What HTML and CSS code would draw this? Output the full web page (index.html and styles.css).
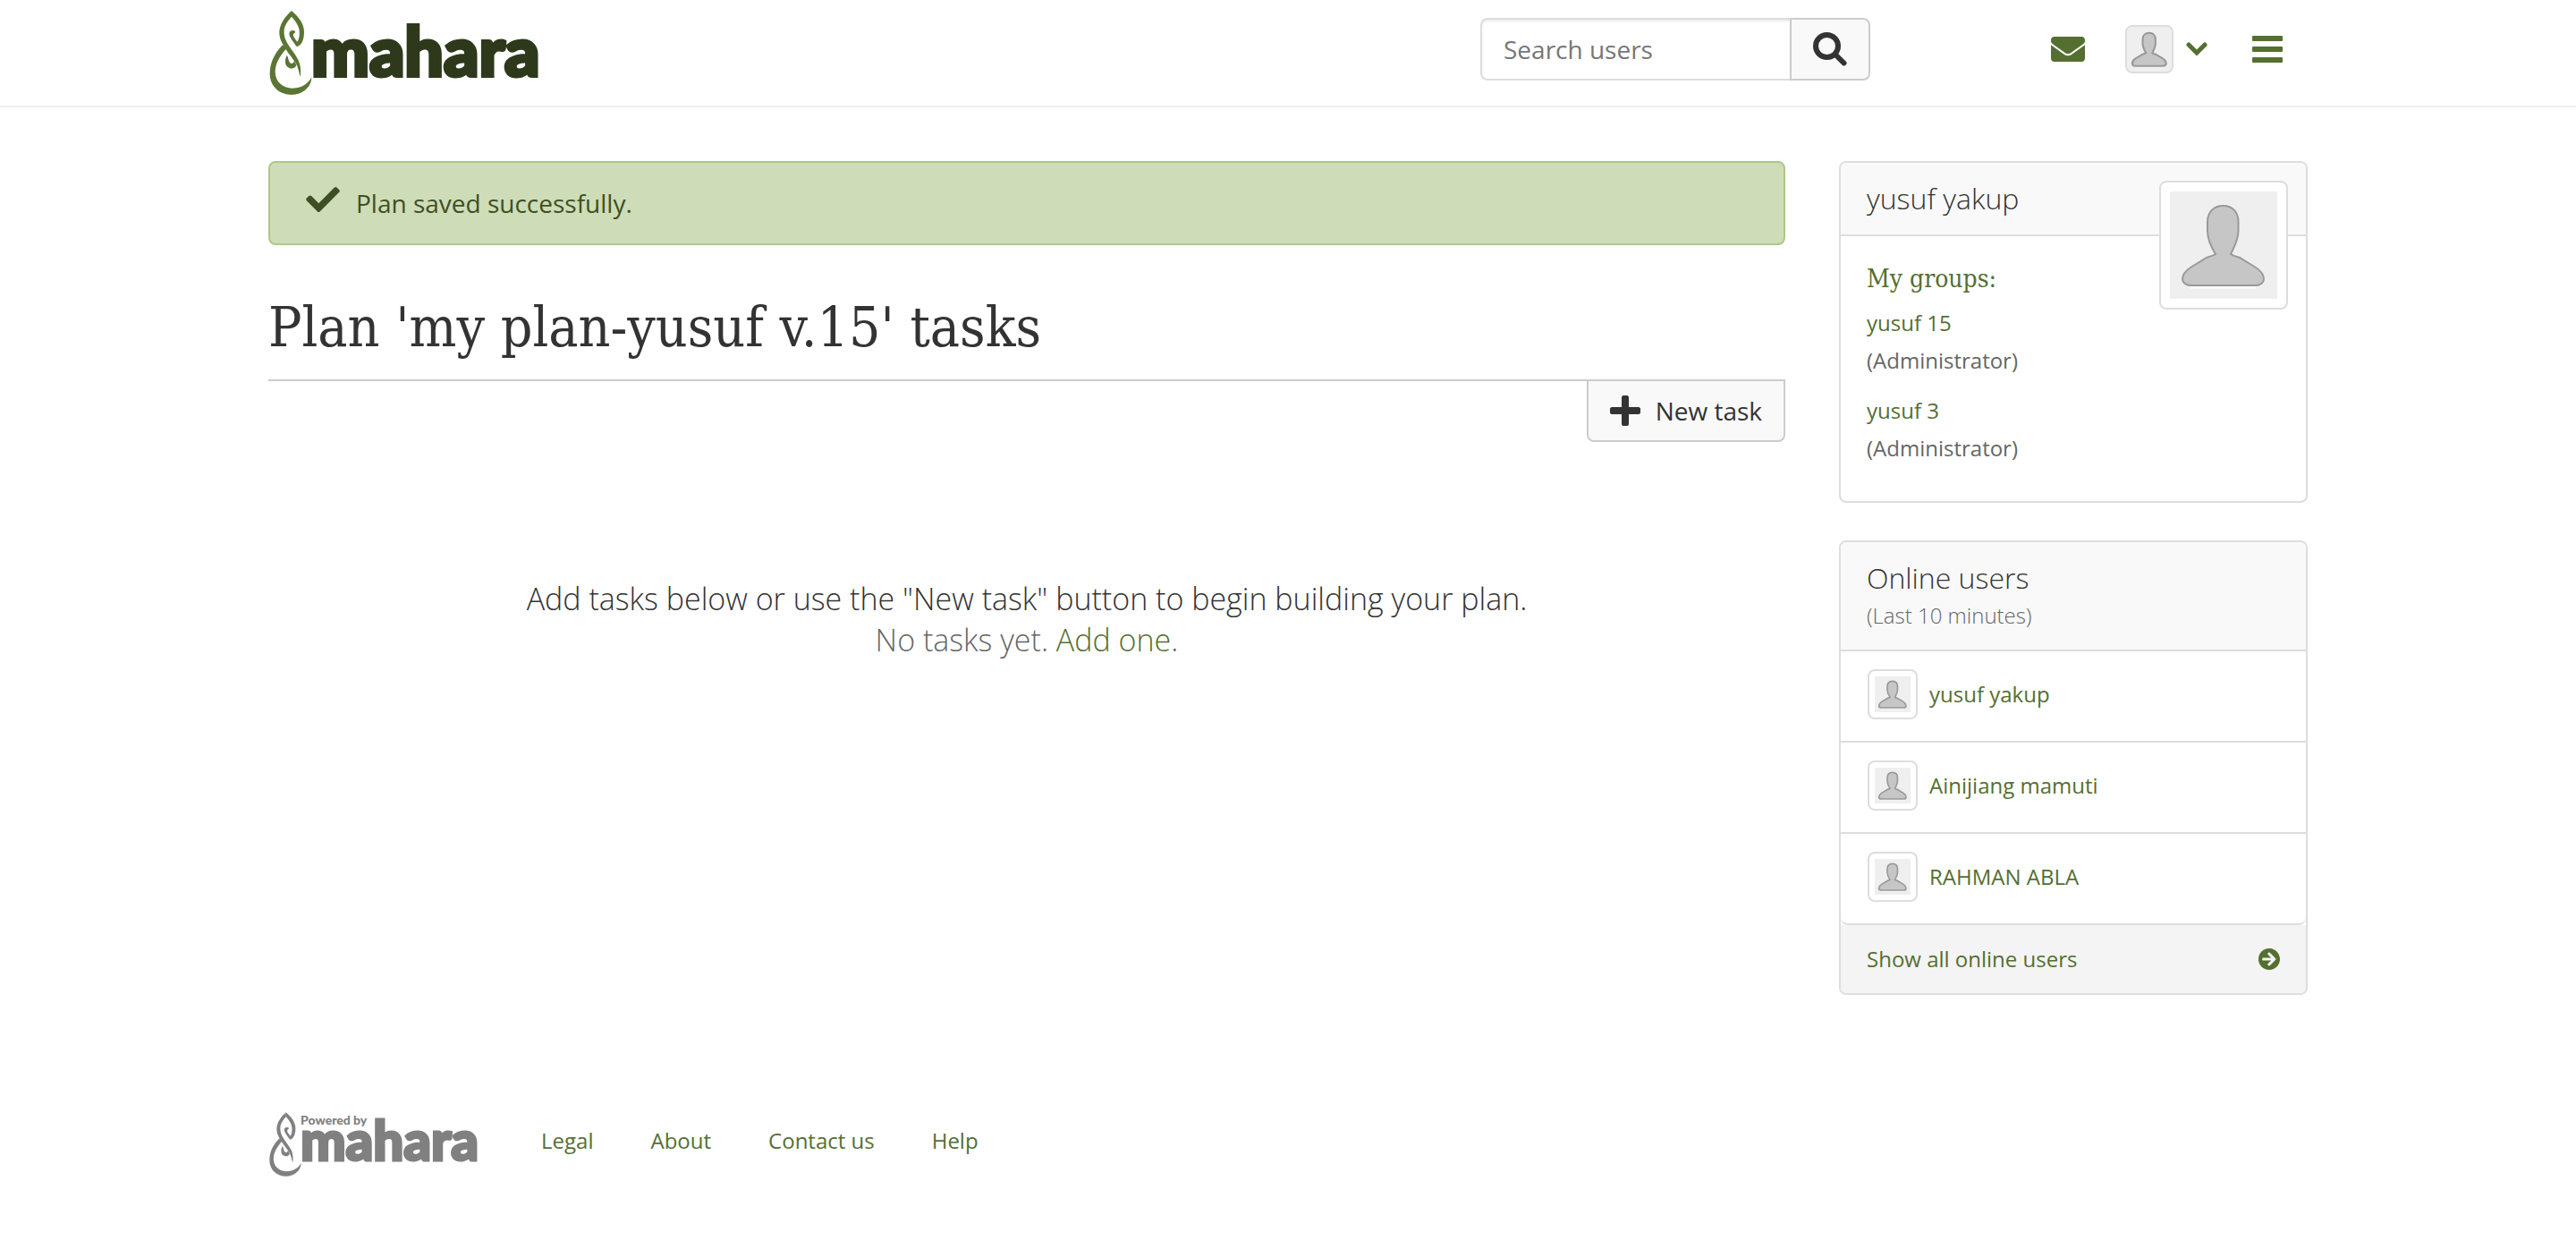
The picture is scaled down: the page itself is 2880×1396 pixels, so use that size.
FILE: index.html
```html
<!DOCTYPE html>
<html lang="en">
<head>
<meta charset="utf-8">
<meta name="viewport" content="width=device-width, initial-scale=1">
<title>Plan 'my plan-yusuf v.15' tasks - Mahara</title>
<link rel="stylesheet" href="styles.css">
</head>
<body>
<svg class="sprite" aria-hidden="true">
  <symbol id="mark" viewBox="60 36 150 288">
    <path d="M138 39C112 62 96 88 97 115C98 140 112 158 125 178C138 196 152 212 157 225C162 238 164 250 167 261C171 240 168 220 160 203C150 184 130 160 122 145C114 130 112 118 113 105C114 88 126 72 138 59Z"/>
    <path d="M138 39C165 62 180 85 180 110C180 135 172 156 155 159C148 150 132 130 130 118C130 105 140 103 150 107C151 111 149 114 146 115C142 118 143 124 147 130L157 143C164 135 165 120 164 105C162 88 150 72 138 59Z"/>
    <path d="M108 154C90 172 65 205 65 250C65 295 100 321 138 321C175 321 205 295 205 262C190 290 165 299 138 299C105 297 83 275 83 243C83 210 108 180 122 164Z"/>
    <path d="M123 188C115 199 114 218 124 227C137 237 150 232 154 222L147 207C144 216 138 219 132 213C127 206 128 198 123 188Z"/>
  </symbol>
  <symbol id="person" viewBox="0 0 120 120">
    <rect width="120" height="120" fill="#efefef"/>
    <path d="M23 107.500H96" stroke="#fff" stroke-width="2"/>
    <path class="person-shape" d="M59.500 16C70 16 76.500 23 76.500 34V44C76.500 54 72 62 68 70C70 72 73 72 78 74L96 85C102 89 105 93 105 98C105 102 101 105 96 105H23C18 105 14 102 14 98C14 93 17 89 23 85L41 74C46 72 48 72 51 70C46 62 42 54 42 44V34C42 23 49 16 59.500 16Z"/>
  </symbol>
</svg>

<header class="site-header">
  <div class="container header-row">
    <a class="logo" href="#" aria-label="Mahara">
      <svg class="logo-mark" aria-hidden="true"><use href="#mark"/></svg>
      <span class="logo-word">mahara</span>
    </a>
    <form class="search">
      <input class="search-input" type="text" placeholder="Search users" aria-label="Search users">
      <button class="search-button" type="submit" aria-label="Search">
        <svg class="icon-search" viewBox="0 0 38 38" aria-hidden="true"><circle cx="15.500" cy="15.500" r="12.500"/><path d="M26.500 26.500L34.500 34.500"/></svg>
      </button>
    </form>
    <nav class="tools" aria-label="User menu">
      <a class="tool" href="#" aria-label="Inbox">
        <svg class="icon-mail" viewBox="0 0 38 28" aria-hidden="true"><path d="M4 0H34C36.500 0 38 1.500 38 4V5C38 6.500 37 7.500 36 8.200L22 18.200C20 19.400 18 19.400 16 18.200L2 8.200C1 7.500 0 6.500 0 5V4C0 1.500 1.500 0 4 0Z"/><path d="M0 9.200L15 20C17.500 21.700 20.500 21.700 23 20L38 9.200V24C38 26.500 36.500 28 34 28H4C1.500 28 0 26.500 0 24Z"/></svg>
      </a>
      <button class="tool user-toggle" type="button" aria-label="Account">
        <svg class="avatar-tiny" aria-hidden="true"><use href="#person"/></svg>
        <svg class="icon-chevron" viewBox="0 0 24 16" aria-hidden="true"><path d="M3 3L12 12L21 3"/></svg>
      </button>
      <button class="tool" type="button" aria-label="Main menu">
        <svg class="icon-bars" viewBox="0 0 34 30" aria-hidden="true"><rect width="34" height="6" rx="1"/><rect y="12" width="34" height="6" rx="1"/><rect y="24" width="34" height="6" rx="1"/></svg>
      </button>
    </nav>
  </div>
</header>

<div class="container columns">
  <main>
    <div class="alert" role="status">
      <svg class="icon-check" viewBox="0 65 512 382" aria-hidden="true"><path d="M173.898 439.404l-166.400-166.400c-9.997-9.997-9.997-26.206 0-36.204l36.203-36.204c9.997-9.998 26.207-9.998 36.204 0L192 312.690 432.095 72.596c9.997-9.997 26.207-9.997 36.204 0l36.203 36.204c9.997 9.997 9.997 26.206 0 36.204l-294.400 294.401c-9.998 9.997-26.207 9.997-36.204-.001z"/></svg>
      <span>Plan saved successfully.</span>
    </div>
    <h1 class="page-title">Plan 'my plan-yusuf v.15' tasks</h1>
    <div class="actions">
      <button class="new-task" type="button">
        <svg class="icon-plus" viewBox="0 0 34 34" aria-hidden="true"><path d="M15 0H19C20 0 21 1 21 2V13H32C33 13 34 14 34 15V19C34 20 33 21 32 21H21V32C21 33 20 34 19 34H15C14 34 13 33 13 32V21H2C1 21 0 20 0 19V15C0 14 1 13 2 13H13V2C13 1 14 0 15 0Z"/></svg>
        <span>New task</span>
      </button>
    </div>
    <div class="empty">
      <p class="lead">Add tasks below or use the "New task" button to begin building your plan.</p>
      <p class="lead lead-muted">No tasks yet. <a href="#">Add one</a>.</p>
    </div>
  </main>

  <aside class="sidebar">
    <section class="card">
      <h2 class="card-head">yusuf yakup</h2>
      <a class="profile-pic" href="#" aria-label="Profile picture"><svg class="avatar-large" aria-hidden="true"><use href="#person"/></svg></a>
      <div class="groups">
        <h3 class="groups-title">My groups:</h3>
        <ul class="group-list">
          <li><a href="#">yusuf 15</a><br>(Administrator)</li>
          <li><a href="#">yusuf 3</a><br>(Administrator)</li>
        </ul>
      </div>
    </section>

    <section class="card">
      <h2 class="card-head">Online users <small class="card-sub">(Last 10 minutes)</small></h2>
      <ul class="users">
        <li class="user"><a class="user-link" href="#"><svg class="avatar" aria-hidden="true"><use href="#person"/></svg>yusuf yakup</a></li>
        <li class="user"><a class="user-link" href="#"><svg class="avatar" aria-hidden="true"><use href="#person"/></svg>Ainijiang mamuti</a></li>
        <li class="user"><a class="user-link" href="#"><svg class="avatar" aria-hidden="true"><use href="#person"/></svg>RAHMAN ABLA</a></li>
      </ul>
      <a class="card-foot" href="#">Show all online users
        <svg class="icon-arrow" viewBox="8 8 496 496" aria-hidden="true"><path d="M256 8c137 0 248 111 248 248S393 504 256 504 8 393 8 256 119 8 256 8zm-28.900 143.600l75.500 72.400H120c-13.300 0-24 10.700-24 24v16c0 13.300 10.700 24 24 24h182.600l-75.500 72.400c-9.700 9.300-9.900 24.800-.4 34.300l11 10.900c9.400 9.400 24.600 9.400 33.900 0L404.300 273c9.400-9.400 9.400-24.600 0-33.900L271.600 106.300c-9.400-9.400-24.600-9.400-33.900 0l-11 10.900c-9.500 9.600-9.300 25.100.4 34.400z"/></svg>
      </a>
    </section>
  </aside>
</div>

<footer class="container site-footer">
  <a class="powered" href="#" aria-label="Powered by Mahara">
    <svg class="powered-mark" aria-hidden="true"><use href="#mark"/></svg>
    <span class="powered-text"><span class="powered-by">Powered by</span><span class="powered-word">mahara</span></span>
  </a>
  <nav class="footer-links" aria-label="Footer">
    <a href="#">Legal</a>
    <a href="#">About</a>
    <a href="#">Contact us</a>
    <a href="#">Help</a>
  </nav>
</footer>
</body>
</html>
```
FILE: styles.css
```css
:root {
  --green: #556f31;
  --dark-green: #2e391c;
  --text: #333;
  --muted: #666;
  --line: #ddd;
  --line-dark: #ccc;
  --slab: "Roboto Slab", "DejaVu Serif Condensed", "DejaVu Serif", serif;
}

*, *::before, *::after { box-sizing: border-box; }

body {
  margin: 0;
  background: #fff;
  color: var(--text);
  font: 400 24px/42px "Open Sans", "Noto Sans", sans-serif;
}

a { color: var(--green); text-decoration: none; }
h1, h2, h3, p, ul { margin: 0; padding: 0; font-weight: 400; }
ul { list-style: none; }
svg { display: block; flex: none; fill: currentColor; }
button, input { font: inherit; color: inherit; }
button { cursor: pointer; }
.sprite { position: absolute; width: 0; height: 0; }
.person-shape { fill: #c6c6c6; stroke: #999; stroke-width: var(--edge, 2px); }

.container { width: 100%; max-width: 2340px; margin: 0 auto; padding: 0 30px; }

/* Header */
.site-header { border-bottom: 2px solid #eee; }
.header-row { display: flex; align-items: center; height: 118px; }
.logo { display: flex; align-items: center; margin-right: auto; }
.logo-mark { width: 50px; height: 96px; color: #5b7534; }
.logo-word {
  margin: 0 0 8px -2px;
  color: var(--dark-green);
  font: 900 77px/90px Lato, sans-serif;
  -webkit-text-stroke: 4px currentColor;
  stroke-linejoin: round;
}

.search { display: flex; height: 70px; margin: 0 202px 8px 0; font-size: 28px; }
.search-input {
  width: 346px;
  padding: 0 24px;
  border: 2px solid var(--line);
  border-right: 0;
  border-radius: 8px 0 0 8px;
  background: #fff;
  box-shadow: inset 0 2px 2px rgba(0, 0, 0, .075);
}
.search-input::placeholder { color: #777; opacity: 1; }
.search-button {
  display: flex;
  align-items: center;
  padding: 0 24px;
  border: 2px solid var(--line-dark);
  border-radius: 0 8px 8px 0;
  background: #f9f9f9;
}
.icon-search { width: 38px; height: 38px; fill: none; stroke: currentColor; stroke-width: 6; stroke-linecap: round; }

.tools { display: flex; align-items: center; margin: 0 28px 8px 0; gap: 45px; }
.tool { display: flex; align-items: center; padding: 0; border: 0; background: none; color: var(--green); }
.icon-mail { width: 38px; height: 28px; }
.user-toggle { gap: 14px; margin-right: 5px; }
.avatar-tiny { --edge: 5px; width: 54px; height: 54px; border: 2px solid var(--line); border-radius: 8px; background: #efefef; }
.icon-chevron { width: 24px; height: 16px; fill: none; stroke: currentColor; stroke-width: 5; stroke-linecap: round; }
.icon-bars { width: 34px; height: 30px; }

/* Page columns */
.columns {
  display: grid;
  grid-template-columns: minmax(0, 1696fr) minmax(0, 524fr);
  align-items: start;
  gap: 60px;
  padding-top: 60px;
}

.alert {
  display: flex;
  align-items: center;
  gap: 18px;
  padding: 24px 40px;
  border: 2px solid #adc887;
  border-radius: 8px;
  background: #cedcb8;
  color: #3f4f24;
  font-size: 28px;
}
.icon-check { width: 38px; height: 28px; margin-bottom: 8px; }

.page-title {
  margin-top: 50px;
  padding-bottom: 16px;
  border-bottom: 2px solid var(--line-dark);
  font: 300 62px/84px var(--slab);
}
.actions { display: flex; justify-content: flex-end; }
.new-task {
  display: flex;
  align-items: center;
  gap: 17px;
  height: 68px;
  padding: 0 24px;
  border: 2px solid var(--line-dark);
  border-top: 0;
  border-radius: 0 0 8px 8px;
  background: #f9f9f9;
  font-size: 28px;
}
.icon-plus { width: 34px; height: 34px; }

.empty { margin-top: 152px; text-align: center; }
.lead { font-size: 34px; line-height: 46px; font-weight: 300; }
.lead-muted { color: var(--muted); }

/* Sidebar */
.sidebar { display: grid; gap: 42px; }
.card { position: relative; border: 2px solid var(--line); border-radius: 8px; overflow: hidden; }
.card-head {
  padding: 19px 29px;
  border-bottom: 2px solid var(--line);
  background: #f9f9f9;
  font-size: 32px;
  line-height: 42px;
  font-weight: 300;
}
.card-sub { display: block; margin-bottom: -2px; color: var(--muted); font-size: 24px; }
.profile-pic {
  position: absolute;
  top: 20px;
  right: 20px;
  padding: 10px;
  border: 2px solid var(--line);
  border-radius: 8px;
  background: #fff;
}
.avatar-large { width: 120px; height: 120px; }
.groups { padding: 24px 29px; color: var(--muted); }
.groups-title { margin-bottom: 4px; color: var(--green); font: 300 28px/48px var(--slab); }
.group-list li { padding-bottom: 14px; }

.users { border-bottom: 2px solid var(--line); border-radius: 0 0 8px 8px; }
.user { padding: 20px 30px 24px; }
.user + .user { border-top: 2px solid var(--line); }
.user-link { display: flex; align-items: center; gap: 13px; }
.avatar { --edge: 5px; width: 56px; height: 56px; padding: 6px; border: 2px solid var(--line); border-radius: 8px; }
.card-foot { display: flex; align-items: center; justify-content: space-between; padding: 17px 29px; background: #f4f4f4; }
.icon-arrow { width: 24px; height: 24px; }

/* Footer */
.site-footer { display: flex; align-items: flex-start; gap: 70px; padding-top: 130px; padding-bottom: 40px; }
.powered { display: flex; color: #808080; }
.powered-mark { width: 38px; height: 74px; }
.powered-text { display: flex; flex-direction: column; margin-left: -2px; }
.powered-by { font: 900 14px/20px Lato, sans-serif; }
.powered-word { font: 900 60px/24px Lato, sans-serif; -webkit-text-stroke: 3px currentColor; }
.footer-links { display: flex; gap: 64px; padding-top: 12px; }
```
